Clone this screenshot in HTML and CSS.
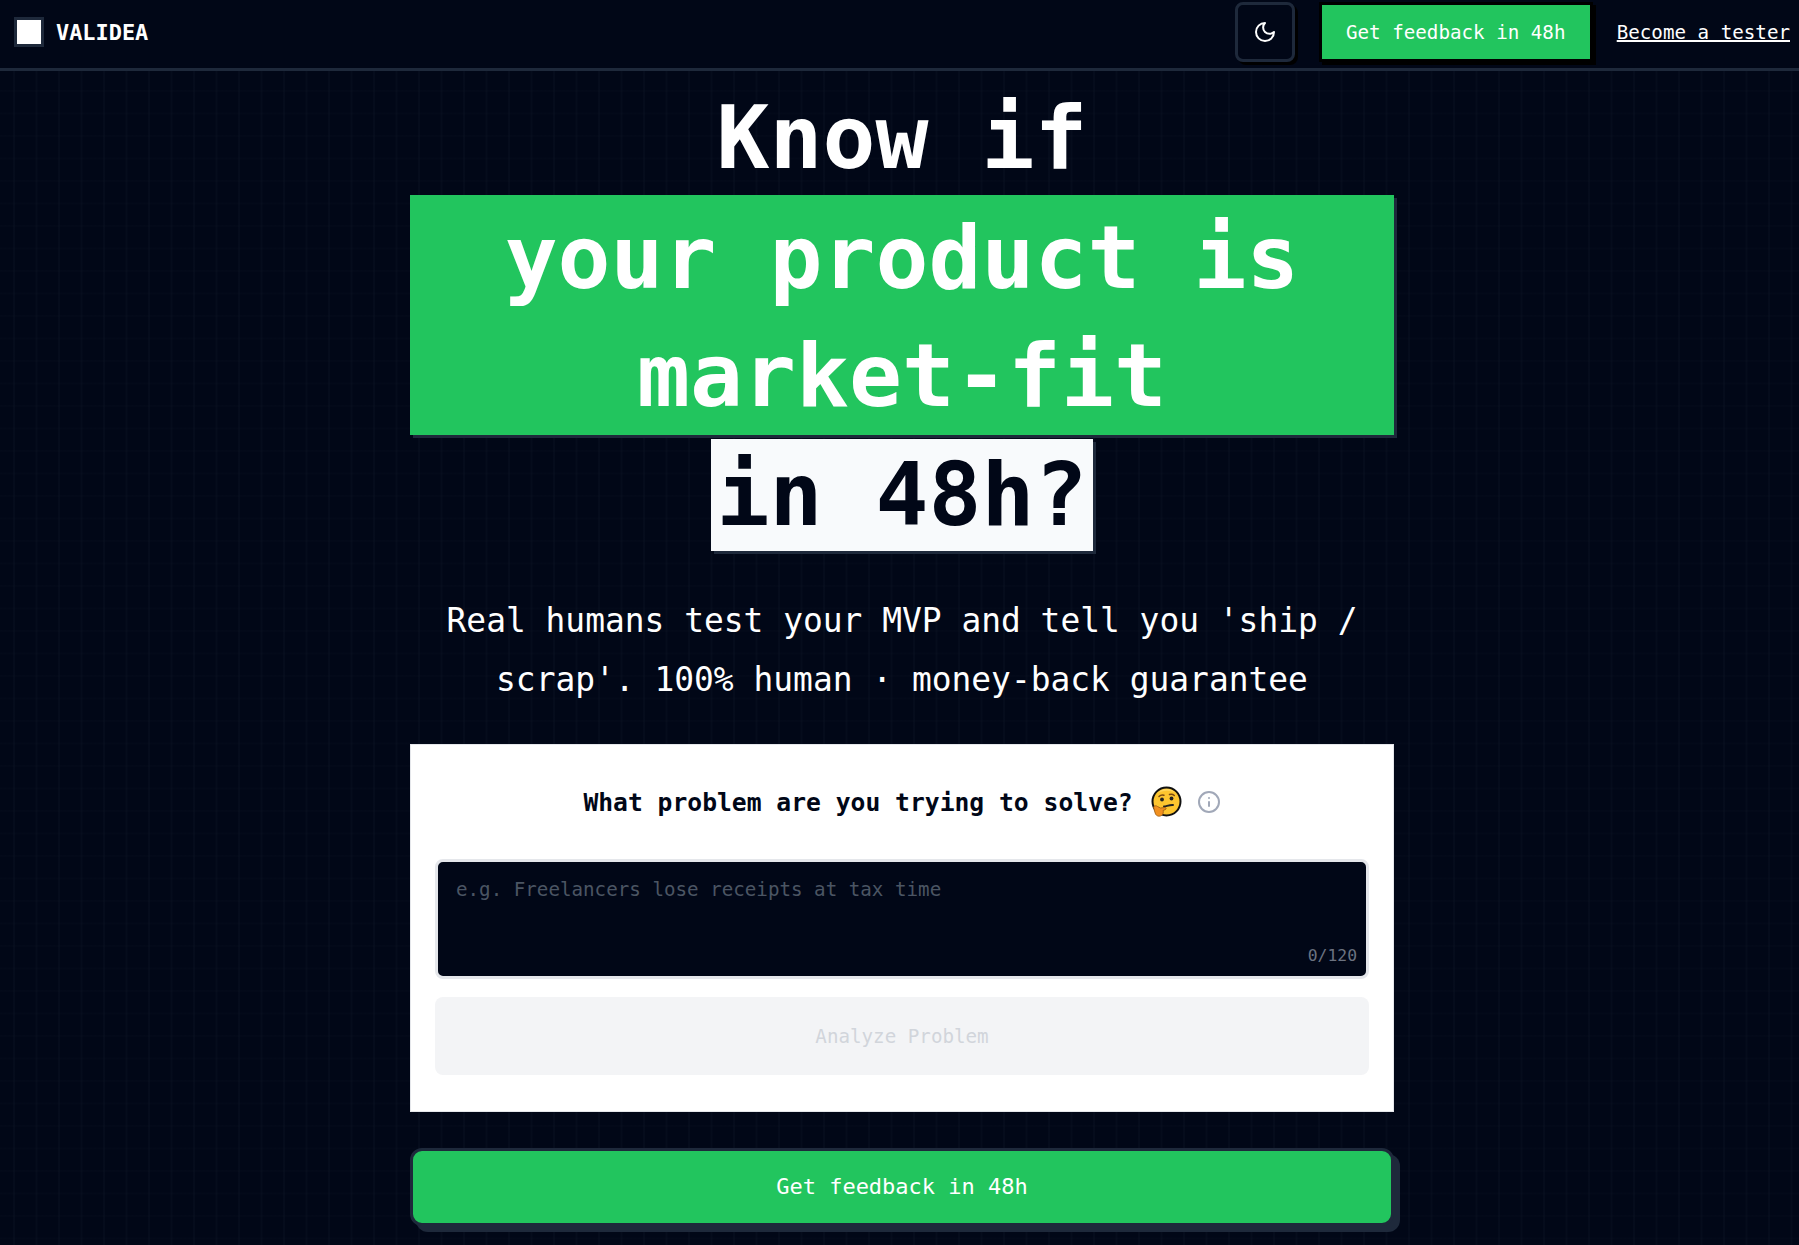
FILE: index.html
```html
<!DOCTYPE html>
<html lang="en">
<head>
    <meta charset="UTF-8">
    <title>Validea</title>
    <link rel="stylesheet" href="styles.css">
</head>
<body>
    <header class="topbar">
        <div class="brand">
            <span class="brand-mark"></span>
            <span class="brand-name">VALIDEA</span>
        </div>
        <div class="topbar-actions">
            <button class="theme-toggle" aria-label="Toggle theme">
                <svg width="24" height="24" viewBox="0 0 24 24" fill="none" stroke="currentColor" stroke-width="2" stroke-linecap="round" stroke-linejoin="round">
                    <path d="M12 3a6 6 0 0 0 9 9 9 9 0 1 1-9-9Z"/>
                </svg>
            </button>
            <a class="cta-small" href="#">Get feedback in 48h</a>
            <a class="tester-link" href="#">Become a tester</a>
        </div>
    </header>
    <main class="content">
        <h1 class="headline">
            <span class="line-plain">Know if</span>
            <span class="line-green">your product is market-fit</span>
            <span class="line-white">in 48h?</span>
        </h1>
        <p class="subtitle">Real humans test your MVP and tell you 'ship / scrap'. 100% human · money-back guarantee</p>
        <form class="card">
            <div class="card-title">
                <span>What problem are you trying to solve?</span>
                <svg class="emoji" width="32" height="32" viewBox="0 0 32 32">
                    <circle cx="16.5" cy="15.5" r="14" fill="#fdc52f" stroke="#111" stroke-width="2"/>
                    <path d="M7 7.500A13 13 0 0 1 26 7c-4-3-14-3.500-19 .5Z" fill="#ffd65c"/>
                    <path d="M9 10.500c1.500-1.500 3.500-1.800 5-1.200M19.500 8.500c1.800-.6 3.500-.2 4.800 1" fill="none" stroke="#7a4a12" stroke-width="1.500" stroke-linecap="round"/>
                    <circle cx="12" cy="13.500" r="1.900" fill="#222"/>
                    <circle cx="21.500" cy="12.500" r="1.900" fill="#222"/>
                    <path d="M14 20.500c3-.5 6-1.800 9-1.500" fill="none" stroke="#222" stroke-width="1.900" stroke-linecap="round"/>
                    <path d="M3.500 21c1-1.500 3-1.500 4-.5l3 1.500 4.500-.5c1.200 0 1.500 1.500.5 2l-2.500 1c.8 1.500 0 4-1.500 5-2.500 1.500-5 .5-6-1.500-1-2-1.200-4.500-2-7Z" fill="#f19020" stroke="#9a5a10" stroke-width=".8"/>
                </svg>
                <svg class="info-icon" width="24" height="24" viewBox="0 0 24 24" fill="none" stroke="currentColor" stroke-width="2" stroke-linecap="round" stroke-linejoin="round">
                    <circle cx="12" cy="12" r="10"/>
                    <path d="M12 16v-4"/>
                    <path d="M12 8h.01"/>
                </svg>
            </div>
            <div class="field">
                <textarea class="problem-input" placeholder="e.g. Freelancers lose receipts at tax time"></textarea>
                <span class="counter">0/120</span>
            </div>
            <button class="analyze" type="button" disabled>Analyze Problem</button>
        </form>
        <a class="cta-large" href="#">Get feedback in 48h</a>
    </main>
</body>
</html>
```

FILE: styles.css
```css
* {
    box-sizing: border-box;
    margin: 0;
}
html, body {
    height: 1245px;
    overflow: hidden;
}
body {
    font-family: "DejaVu Sans Mono", monospace;
    color: #fff;
    background-color: #010717;
    background-image:
        linear-gradient(to right, rgba(30,41,59,0.14) 2px, transparent 2px),
        linear-gradient(to bottom, rgba(30,41,59,0.07) 2px, transparent 2px);
    background-size: 22.5px 22.5px;
    background-position: 13px 0;
}

.topbar {
    height: 71px;
    padding: 0 9px 4px 14px;
    display: flex;
    align-items: center;
    justify-content: space-between;
    background: #010717;
    border-bottom: 3px solid #1e293b;
}
.brand {
    display: flex;
    align-items: center;
    gap: 12px;
}
.brand-mark {
    width: 30px;
    height: 30px;
    background: #fff;
    border: 3px solid #1e293b;
}
.brand-name {
    font-size: 21.9px;
    font-weight: 700;
}
.topbar-actions {
    display: flex;
    align-items: center;
    gap: 24px;
}
.theme-toggle {
    appearance: none;
    width: 60px;
    height: 60px;
    display: flex;
    align-items: center;
    justify-content: center;
    color: #fff;
    background: #010717;
    border: 3px solid #1e293b;
    border-radius: 8px;
    box-shadow: 3px 3px 0 #000;
}
.cta-small {
    width: 274px;
    height: 60px;
    display: flex;
    align-items: center;
    justify-content: center;
    font-size: 19.2px;
    color: #fff;
    text-decoration: none;
    background: #22c55e;
    border: 3px solid #000;
    box-shadow: 3px 3px 0 #000;
}
.tester-link {
    font-size: 19.2px;
    color: #fff;
    text-decoration-thickness: 2px;
}

.content {
    width: 984px;
    margin-left: 410px;
    display: flex;
    flex-direction: column;
    align-items: center;
}
.headline {
    width: 100%;
    display: flex;
    flex-direction: column;
    align-items: center;
    font-size: 88px;
    font-weight: 700;
    text-align: center;
}
.line-plain {
    height: 124px;
    line-height: 134px;
}
.line-green {
    width: 100%;
    height: 240px;
    padding-top: 4px;
    line-height: 118px;
    background: #22c55e;
    box-shadow: 3px 3px 0 #1e293b;
}
.line-white {
    margin-top: 4px;
    padding: 0 5.5px;
    color: #010717;
    background: #f8fafc;
    box-shadow: 3px 3px 0 #1e293b;
    line-height: 112px;
}
.subtitle {
    margin-top: 41px;
    font-size: 32.9px;
    line-height: 58.5px;
    text-align: center;
}

.card {
    width: 100%;
    margin-top: 35px;
    padding: 35px 24px 36px;
    background: #fff;
    border: 1px solid #e5e7eb;
    display: flex;
    flex-direction: column;
    gap: 18px;
}
.card-title {
    display: flex;
    align-items: center;
    justify-content: center;
    height: 44px;
    margin-bottom: 17px;
    font-size: 24.67px;
    font-weight: 700;
    color: #010717;
}
.emoji {
    margin-left: 17px;
}
.info-icon {
    margin-left: 15px;
    color: #a1a8b8;
}
.field {
    position: relative;
}
.problem-input {
    display: block;
    width: 100%;
    height: 120px;
    padding: 16px 18px;
    resize: none;
    font-family: inherit;
    font-size: 19.2px;
    color: #fff;
    background: #010717;
    border: 3px solid #e5e7eb;
    border-radius: 8px;
}
.problem-input::placeholder {
    color: #4b5563;
}
.counter {
    position: absolute;
    right: 12px;
    bottom: 14px;
    font-size: 16.4px;
    color: #6b7280;
}
.analyze {
    appearance: none;
    height: 78px;
    font-family: inherit;
    font-size: 19.2px;
    color: #d1d5db;
    background: #f3f4f6;
    border: none;
    border-radius: 8px;
}

.cta-large {
    width: 100%;
    height: 78px;
    margin-top: 36px;
    padding-bottom: 2px;
    display: flex;
    align-items: center;
    justify-content: center;
    font-size: 22px;
    color: #fff;
    text-decoration: none;
    background: #22c55e;
    border: 3px solid #1e293b;
    border-radius: 12px;
    box-shadow: 6px 6px 0 #1e293b;
}
```
